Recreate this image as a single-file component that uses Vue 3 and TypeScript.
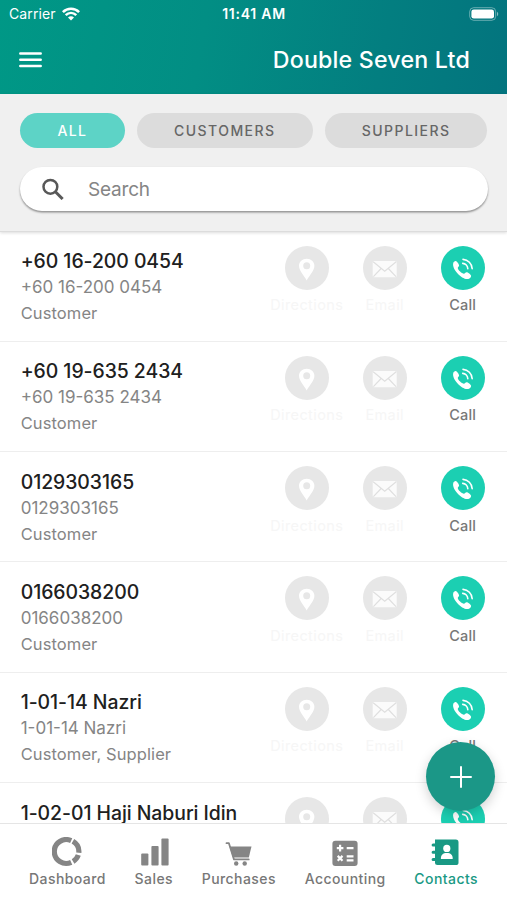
<script setup lang="ts">
interface Contact {
  name: string
  detail: string
  role: string
}

const filters = [
  { label: 'ALL', kind: 'all' },
  { label: 'CUSTOMERS', kind: 'customers' },
  { label: 'SUPPLIERS', kind: 'suppliers' },
]

const contacts: Contact[] = [
  { name: '+60 16-200 0454', detail: '+60 16-200 0454', role: 'Customer' },
  { name: '+60 19-635 2434', detail: '+60 19-635 2434', role: 'Customer' },
  { name: '0129303165', detail: '0129303165', role: 'Customer' },
  { name: '0166038200', detail: '0166038200', role: 'Customer' },
  { name: '1-01-14 Nazri', detail: '1-01-14 Nazri', role: 'Customer, Supplier' },
  { name: '1-02-01 Haji Naburi Idin', detail: '', role: '' },
]
</script>

<template>
  <div class="screen">
    <header class="header">
      <div class="status">
        <div class="carrier">
          <span>Carrier</span>
          <svg class="wifi" viewBox="0 0 18 14" fill="none" stroke="#fff">
            <path d="M.9 5.100C5.400.7 12.600.7 17.100 5.100" stroke-width="2.600" />
            <path d="M3.700 8.200c3.100-3 7.500-3 10.600 0" stroke-width="2.500" />
            <path d="M6 10.600c1.800-1.700 4.200-1.700 6 0L9 13.600z" fill="#fff" stroke="none" />
          </svg>
        </div>
        <span class="time">11:41 AM</span>
        <div class="battery-wrap">
          <svg class="battery" viewBox="0 0 30 14">
            <rect x=".7" y=".7" width="26" height="12.6" rx="4" fill="none" stroke="#fff" stroke-opacity=".4" stroke-width="1" />
            <rect x="2.400" y="2.400" width="22.600" height="9.200" rx="2.400" fill="#fff" />
            <path d="M28 4.800c1.700.7 1.700 3.700 0 4.400z" fill="#fff" fill-opacity=".5" />
          </svg>
        </div>
      </div>
      <div class="bar">
        <svg class="menu" viewBox="0 0 23 16" stroke="#fff" stroke-width="2.500" stroke-linecap="round">
          <path d="M1.300 1.500h20.400M1.300 7.800h20.400M1.300 14h20.400" />
        </svg>
        <h1 class="title">Double Seven Ltd</h1>
      </div>
    </header>

    <section class="tools">
      <div class="filters">
        <button v-for="f in filters" :key="f.kind" class="chip" :class="f.kind">{{ f.label }}</button>
      </div>
      <div class="search">
        <svg class="lens" viewBox="0 0 22 22" fill="none" stroke="#585858">
          <circle cx="8.400" cy="8.800" r="6.900" stroke-width="2.500" />
          <path d="M13.400 13.800l7.200 7.200" stroke-width="3" />
        </svg>
        <span>Search</span>
      </div>
    </section>

    <main class="list">
      <article v-for="c in contacts" :key="c.name" class="row">
        <div class="info">
          <div class="name">{{ c.name }}</div>
          <div v-if="c.detail" class="detail">{{ c.detail }}</div>
          <div v-if="c.role" class="role">{{ c.role }}</div>
        </div>
        <div class="action off">
          <svg viewBox="0 0 44 44">
            <circle cx="22" cy="22" r="22" fill="#e7e7e7" />
            <path d="M21.700 12.700c-4.300 0-7.700 3-7.700 7.100 0 4.600 4.500 9 7.700 14.700 3.200-5.700 7.700-10.100 7.700-14.700 0-4.100-3.400-7.100-7.700-7.100z" fill="#fff" />
            <circle cx="21.700" cy="19.800" r="3.500" fill="#e7e7e7" />
          </svg>
          <span v-if="c.detail">Directions</span>
        </div>
        <div class="action off">
          <svg viewBox="0 0 44 44">
            <circle cx="22" cy="22" r="22" fill="#e7e7e7" />
            <rect x="9.700" y="15" width="24" height="16.200" rx="1.500" fill="#fbfbfb" />
            <path d="M10.200 15.700L21.700 25.300l11.500-9.600M10.400 30.700l7.700-8.200M33 30.700l-7.700-8.200" fill="none" stroke="#dfdfdf" stroke-width="1.200" />
          </svg>
          <span v-if="c.detail">Email</span>
        </div>
        <div class="action call">
          <svg viewBox="0 0 44 44">
            <circle cx="22" cy="22" r="22" fill="#1bcfb2" />
            <path d="M12.200 17.200c.3-1.300 1.500-2.300 2.500-2.200 1.200.2 3.400 3.200 3.400 4.500 0 1-1.300 1.500-1.300 2.500 0 1.900 4.200 5.700 6.100 5.700 1 0 1.500-1.500 2.600-1.500 1.300 0 4.400 2.200 4.600 3.500.2 1.200-1.200 2.800-2.800 3.200-5.800 1.500-16.600-9.500-15.100-15.700z" fill="#fff" />
            <path d="M21.700 17.400c2.800.2 5 2.500 5.100 5.300M22 13.400c4.900.3 9 4.300 9.200 9.300" fill="none" stroke="#fff" stroke-width="1.600" stroke-linecap="round" />
          </svg>
          <span v-if="c.detail">Call</span>
        </div>
      </article>
    </main>

    <button class="fab" aria-label="Add">
      <svg viewBox="0 0 22 22" stroke="#fff" stroke-width="2" stroke-linecap="round"><path d="M11 1v20M1 11h20" /></svg>
    </button>

    <nav class="tabs">
      <div class="tab dashboard">
        <svg viewBox="0 0 30 30" fill="none" stroke="#858585" stroke-width="5.200">
          <path d="M19.200 3.700A11.900 11.900 0 1 0 19.200 25.300" />
          <path d="M20.900 4.300A11.900 11.900 0 0 1 26.800 15.800" />
          <path d="M26.300 18A11.900 11.900 0 0 1 21.100 24.400" />
        </svg>
        <span>Dashboard</span>
      </div>
      <div class="tab sales">
        <svg viewBox="0 0 30 30" fill="#858585">
          <rect x="2.200" y="16.500" width="7.200" height="12" rx="1" />
          <rect x="12.400" y="9" width="7.200" height="19.500" rx="1" />
          <rect x="22.400" y="1.500" width="7.200" height="27" rx="1" />
        </svg>
        <span>Sales</span>
      </div>
      <div class="tab purchases">
        <svg viewBox="0 0 30 30" fill="#858585">
          <path d="M2.500 6.200h2.400l5.100 16.200h14.700" fill="none" stroke="#858585" stroke-width="1.800" stroke-linecap="round" stroke-linejoin="round" />
          <path d="M5.500 9.500h22l-2.700 11H9z" />
          <circle cx="12.200" cy="26.500" r="2.200" /><circle cx="20.700" cy="26.500" r="2.200" />
        </svg>
        <span>Purchases</span>
      </div>
      <div class="tab accounting">
        <svg viewBox="0 0 30 30">
          <rect x="2.400" y="3.700" width="25.200" height="25.200" rx="3" fill="#858585" />
          <path d="M6.800 11.100h6.600M10.100 7.800v6.600M16.700 11.100h6.800M7.700 18.900l4.800 4.800M12.500 18.900l-4.800 4.800M16.700 19.300h6.800M16.700 23.400h6.800" stroke="#fff" stroke-width="2.200" />
        </svg>
        <span>Accounting</span>
      </div>
      <div class="tab contacts">
        <svg viewBox="0 0 30 30">
          <path d="M4 2.600h20.800q2.700 0 2.700 2.700v20.100q0 2.700-2.700 2.700H6.500q-2.500 0-2.500-2.500z" fill="#199984" />
          <path d="M2.100 7.900h4M2.100 15.300h4M2.100 22.600h4" stroke="#199984" stroke-width="3" stroke-linecap="round" />
          <circle cx="15.800" cy="11.400" r="3.600" fill="#fff" />
          <path d="M9.900 22.100c-.2-4.400 2.100-6.100 5.900-6.100s6.100 1.700 5.900 6.100z" fill="#fff" />
        </svg>
        <span>Contacts</span>
      </div>
    </nav>
  </div>
</template>

<style>
body { margin: 0; background: #fff; }
</style>

<style scoped>
* { box-sizing: border-box; }
.screen { position: relative; display: flex; flex-direction: column; width: 507px; height: 900px; overflow: hidden; background: #fff; font-family: Inter, "Liberation Sans", sans-serif; }
svg { display: block; flex: none; }
.header { height: 94px; flex: none; color: #fff; background: linear-gradient(100deg, #009886 0%, #028e84 40%, #037e80 75%, #03747e 100%); }
.status { display: grid; grid-template-columns: 1fr auto 1fr; height: 27px; padding: 0 8px 0 9px; align-items: center; }
.carrier { display: flex; align-items: center; gap: 6px; font-size: 14px; letter-spacing: .1px; }
.wifi { width: 18px; height: 14px; }
.time { font-size: 14px; font-weight: 600; letter-spacing: .75px; }
.battery-wrap { display: flex; justify-content: flex-end; }
.battery { width: 30px; height: 14px; }
.bar { display: flex; justify-content: space-between; align-items: center; height: 66px; padding: 0 37px 0 19px; }
.menu { width: 23px; height: 16px; }
.title { margin: 0; font-size: 23.200px; line-height: 28px; font-weight: 500; letter-spacing: .2px; white-space: nowrap; }
.tools { height: 137.500px; flex: none; padding: 19px 19.500px 0 20px; background: #f0f0f0; border-bottom: 1px solid #dcdcdc; box-shadow: 0 1px 3px rgba(0,0,0,.14); z-index: 1; }
.filters { display: flex; gap: 12px; }
.chip { height: 35px; padding: 0; border: 0; border-radius: 18px; background: #dcdcdc; color: #666; font: 500 14px Inter, sans-serif; letter-spacing: 1.450px; }
.chip.all { width: 105px; color: #fff; background: #5dd3c6; }
.chip.customers { width: 176px; }
.chip.suppliers { width: 163px; }
.search { display: flex; align-items: center; height: 44px; margin-top: 19px; padding-left: 22px; gap: 24px; border-radius: 22px; background: #fff; color: #858585; font-size: 19px; letter-spacing: -.2px; box-shadow: 0 1.500px 2px rgba(0,0,0,.4); }
.lens { width: 22px; height: 22px; }
.list { flex: 1; min-height: 0; overflow: hidden; }
.row { display: flex; height: 110.300px; padding: 14px 5.300px 0 20.700px; border-bottom: 1.500px solid #eee; }
.info { flex: 1; min-width: 0; padding-top: 1.600px; white-space: nowrap; }
.name { color: #202020; font-size: 19.400px; font-weight: 500; line-height: 28px; letter-spacing: -.04px; }
.detail { color: #858585; font-size: 17px; line-height: 25px; }
.role { color: #858585; font-size: 16.500px; line-height: 27px; letter-spacing: .1px; }
.action { display: flex; flex-direction: column; align-items: center; width: 78px; flex: none; font-size: 14.500px; line-height: 18px; letter-spacing: .2px; color: #777; }
.action svg { width: 44px; height: 44px; margin-bottom: 6.500px; }
.call { font-weight: 500; }
.off { color: #f6f6f6; letter-spacing: .4px; }
.fab { position: absolute; left: 426px; top: 742px; display: grid; place-items: center; width: 69px; height: 69px; padding: 0; border: 0; border-radius: 50%; background: #1b9787; box-shadow: 0 4px 12px rgba(0,0,0,.18); z-index: 2; }
.fab svg { width: 22px; height: 22px; }
.tabs { display: flex; justify-content: space-between; flex: none; height: 77px; padding: 13px 29px 0 29px; background: #fff; border-top: 1px solid #e5e5e5; color: #777; font-size: 14px; line-height: 20px; font-weight: 500; letter-spacing: .43px; }
.tab { display: flex; flex-direction: column; align-items: center; gap: 1.500px; }
.tab svg { width: 30px; height: 30px; }
.contacts { color: #199984; }
</style>
